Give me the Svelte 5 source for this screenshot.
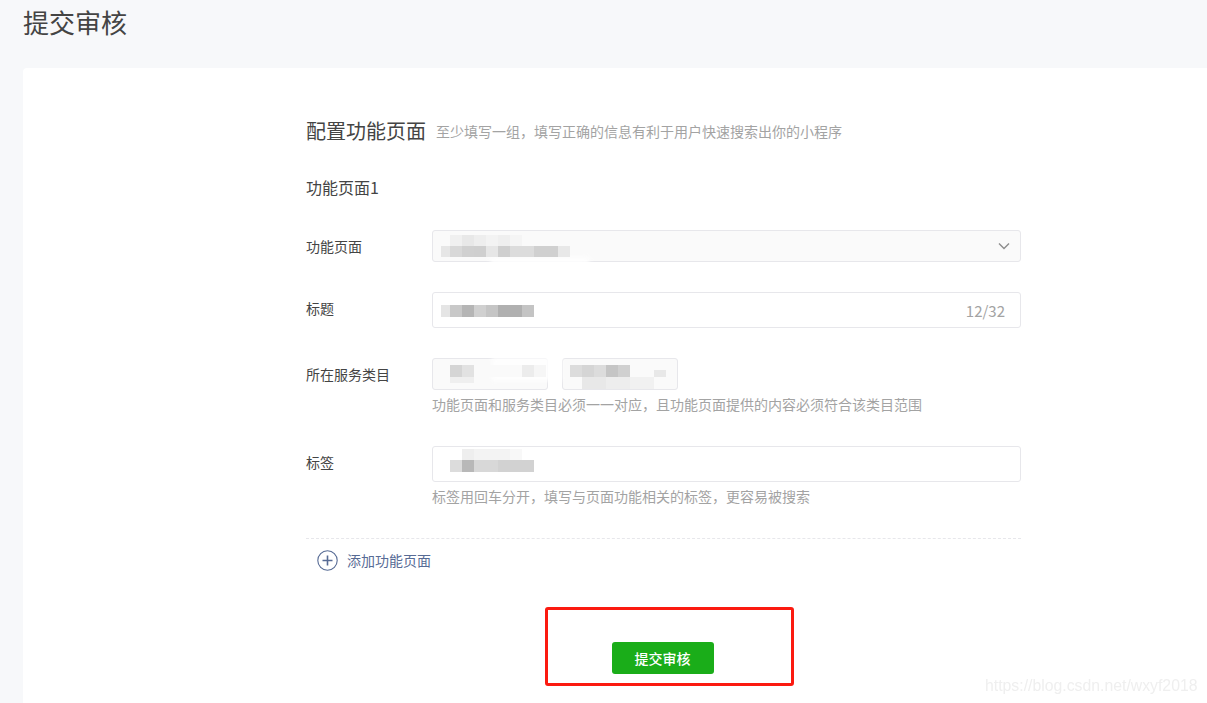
<script>
  // blurred-out values: each row is a strip of 12px mosaic cells
  const selectBlur = [
    { top: 16, h: 11, from: -0.75, cells: ['#e6e6e6'] },
    { top: 5, h: 11, from: 0, cells: ['#f0f0f0', '#e8e8e8', '#eeeeee', '#f3f3f3', '#efefef', '#f5f5f5'] },
    { top: 16, h: 11, from: 0, cells: ['#d8d8d8', '#d0d0d0', '#cfcfcf', '#e6e6e6', '#cfcfcf', '#dcdcdc', '#dcdcdc', '#d0d0d0', '#d0d0d0', '#e8e8e8'] }
  ];
  const titleBlur = [
    { top: 13, h: 12, from: -0.75, cells: ['#e5e5e5'] },
    { top: 13, h: 12, from: 0, cells: ['#c8c8c8', '#b5b5b5', '#d0d0d0', '#c5c5c5', '#b0b0b0', '#b0b0b0', '#c4c4c4'] }
  ];
  const serviceBlur = [
    { top: 7, h: 12, from: 0, cells: ['#d5d5d5', '#e2e2e2', '#fafafa', '#fafafa', '#fafafa', '#fafafa', '#ececec', '#f6f6f6'] },
    { top: 19, h: 6, from: 0, cells: ['#efefef', '#efefef'] },
    { top: 7, h: 12, from: 10, cells: ['#dcdcdc', '#d5d5d5', '#dcdcdc', '#c5c5c5', '#d0d0d0'] },
    { top: 19, h: 12, from: 11, cells: ['#e8e8e8', '#e8e8e8', '#ededed', '#ededed', '#f1f1f1', '#f1f1f1'] },
    { top: 12, h: 7, from: 17, cells: ['#e8e8e8'] }
  ];
  const tagBlur = [
    { top: 3, h: 11, from: 1, cells: ['#eeeeee', '#f3f3f3', '#f3f3f3', '#f3f3f3', '#f8f8f8'] },
    { top: 14, h: 12, from: 0, cells: ['#dcdcdc', '#b8b8b8', '#d8d8d8', '#d8d8d8', '#d2d2d2', '#d2d2d2', '#d2d2d2'] }
  ];
</script>

{#snippet blur(rows)}
  <div class="blur">
    {#each rows as row}
      {#each row.cells as c, i}
        <span class="cell" style="left: {(row.from + i) * 12}px; top: {row.top}px; height: {row.h}px; background: {c}"></span>
      {/each}
    {/each}
  </div>
{/snippet}

<div class="page">
  <h1 class="page-title">提交审核</h1>

  <div class="card">
    <div class="form">
      <div class="head">
        <h2>配置功能页面</h2>
        <span class="tips">至少填写一组，填写正确的信息有利于用户快速搜索出你的小程序</span>
      </div>

      <h3>功能页面1</h3>

      <div class="row row-select">
        <label>功能页面</label>
        <div class="control">
          <div class="box select">
            <svg class="arrow" width="12" height="8" viewBox="0 0 12 8"><path d="M1 1.5 L6 6.5 L11 1.5" fill="none" stroke="#8d8d8d" stroke-width="1.4" /></svg>
          </div>
          <span class="smear smear-select"></span>
          {@render blur(selectBlur)}
        </div>
      </div>

      <div class="row row-title">
        <label>标题</label>
        <div class="control">
          <div class="box input">
            <span class="count">12/32</span>
          </div>
          {@render blur(titleBlur)}
        </div>
      </div>

      <div class="row row-service">
        <label>所在服务类目</label>
        <div class="control">
          <div class="pair">
            <div class="box small"></div>
            <div class="box small"></div>
          </div>
          <span class="smear smear-service"></span>
          {@render blur(serviceBlur)}
          <p class="hint">功能页面和服务类目必须一一对应，且功能页面提供的内容必须符合该类目范围</p>
        </div>
      </div>

      <div class="row row-tag">
        <label>标签</label>
        <div class="control">
          <div class="box input"></div>
          {@render blur(tagBlur)}
          <p class="hint">标签用回车分开，填写与页面功能相关的标签，更容易被搜索</p>
        </div>
      </div>

      <div class="add">
        <svg width="21" height="21" viewBox="0 0 21 21">
          <circle cx="10.5" cy="10.5" r="9.7" fill="none" stroke="#576b95" stroke-width="1.1" />
          <path d="M5.5 10.5 H15.5 M10.5 5.5 V15.5" fill="none" stroke="#576b95" stroke-width="1.6" />
        </svg>
        <span>添加功能页面</span>
      </div>

      <div class="actions">
        <button>提交审核</button>
      </div>
    </div>
  </div>

  <div class="annotation"></div>
  <div class="watermark">https://blog.csdn.net/wxyf2018</div>
</div>

<style>
  :global(body) {
    margin: 0;
    background: #f7f8fa;
    overflow: hidden;
  }

  .page {
    position: relative;
    height: 703px;
    overflow: hidden;
    font-family: "Noto Sans CJK SC", "Liberation Sans", sans-serif;
    color: #444;
  }

  .page-title {
    margin: 0;
    padding-left: 23px;
    height: 68px;
    font-size: 26px;
    font-weight: 400;
    line-height: 44px;
  }

  .card {
    margin: 0 -20px 0 23px;
    height: 700px;
    background: #fff;
    border-radius: 4px;
  }

  .form {
    width: 715px;
    margin-left: 283px;
  }

  .head {
    display: flex;
    align-items: center;
    padding-top: 47px;
    line-height: 32px;
  }

  h2 {
    margin: 0;
    font-size: 20px;
    font-weight: 400;
  }

  .tips {
    margin-left: 10px;
    font-size: 14px;
    color: #a3a3a3;
  }

  h3 {
    margin: 28px 0 0;
    font-size: 16px;
    font-weight: 400;
    line-height: 24px;
  }

  .row {
    display: flex;
  }

  label {
    width: 126px;
    flex: none;
    padding-top: 6px;
    font-size: 14px;
    line-height: 20px;
  }

  .control {
    position: relative;
    flex: 1;
  }

  .box {
    box-sizing: border-box;
    border: 1px solid #e7e7eb;
    border-radius: 3px;
    background: #fff;
  }

  .select {
    display: flex;
    align-items: center;
    justify-content: flex-end;
    height: 32px;
    padding-right: 10px;
    background: #fafafa;
  }

  .input {
    display: flex;
    align-items: center;
    justify-content: flex-end;
    height: 36px;
    padding-right: 15px;
  }

  .count {
    font-size: 15px;
    color: #a3a3a3;
  }

  .pair {
    display: flex;
    gap: 14px;
  }

  .small {
    width: 116px;
    height: 32px;
    background: #fafafa;
  }

  .hint {
    margin: 4px 0 0;
    font-size: 14px;
    line-height: 20px;
    color: #a3a3a3;
  }

  .row-select {
    margin-top: 31px;
  }

  .row-title {
    margin-top: 30px;
  }

  .row-service {
    margin-top: 30px;
  }

  .row-tag {
    margin-top: 32px;
  }

  /* mosaic over the values, starts 18px into the field */
  .blur {
    position: absolute;
    left: 18px;
    top: 0;
  }

  .cell {
    position: absolute;
    width: 12px;
  }

  .smear {
    position: absolute;
    background: #fff;
    opacity: 0.85;
    filter: blur(2px);
  }

  .smear-select {
    left: 58px;
    top: 27px;
    width: 100px;
    height: 9px;
    border-radius: 5px;
  }

  .smear-service {
    left: 60px;
    top: -1px;
    width: 70px;
    height: 24px;
  }

  .add {
    display: flex;
    align-items: center;
    gap: 9px;
    margin-top: 32px;
    padding: 11px 0 0 11px;
    border-top: 1px dashed #e7e7eb;
    font-size: 14px;
    line-height: 21px;
    color: #576b95;
  }

  .add svg {
    display: block;
  }

  .actions {
    display: flex;
    justify-content: center;
    margin-top: 71px;
    padding-right: 2px;
  }

  button {
    width: 102px;
    height: 32px;
    border: 0;
    border-radius: 3px;
    background: #1aad19;
    color: #fff;
    font: 500 14px "Noto Sans CJK SC", sans-serif;
  }

  /* red marker drawn on top of the screenshot */
  .annotation {
    position: absolute;
    left: 545px;
    top: 607px;
    width: 243px;
    height: 73px;
    border: 3px solid #fb1a10;
    border-radius: 3px;
  }

  .watermark {
    position: absolute;
    left: 985px;
    top: 677px;
    font: 15.8px "Liberation Sans", sans-serif;
    color: #efefef;
    filter: blur(0.4px);
  }
</style>
